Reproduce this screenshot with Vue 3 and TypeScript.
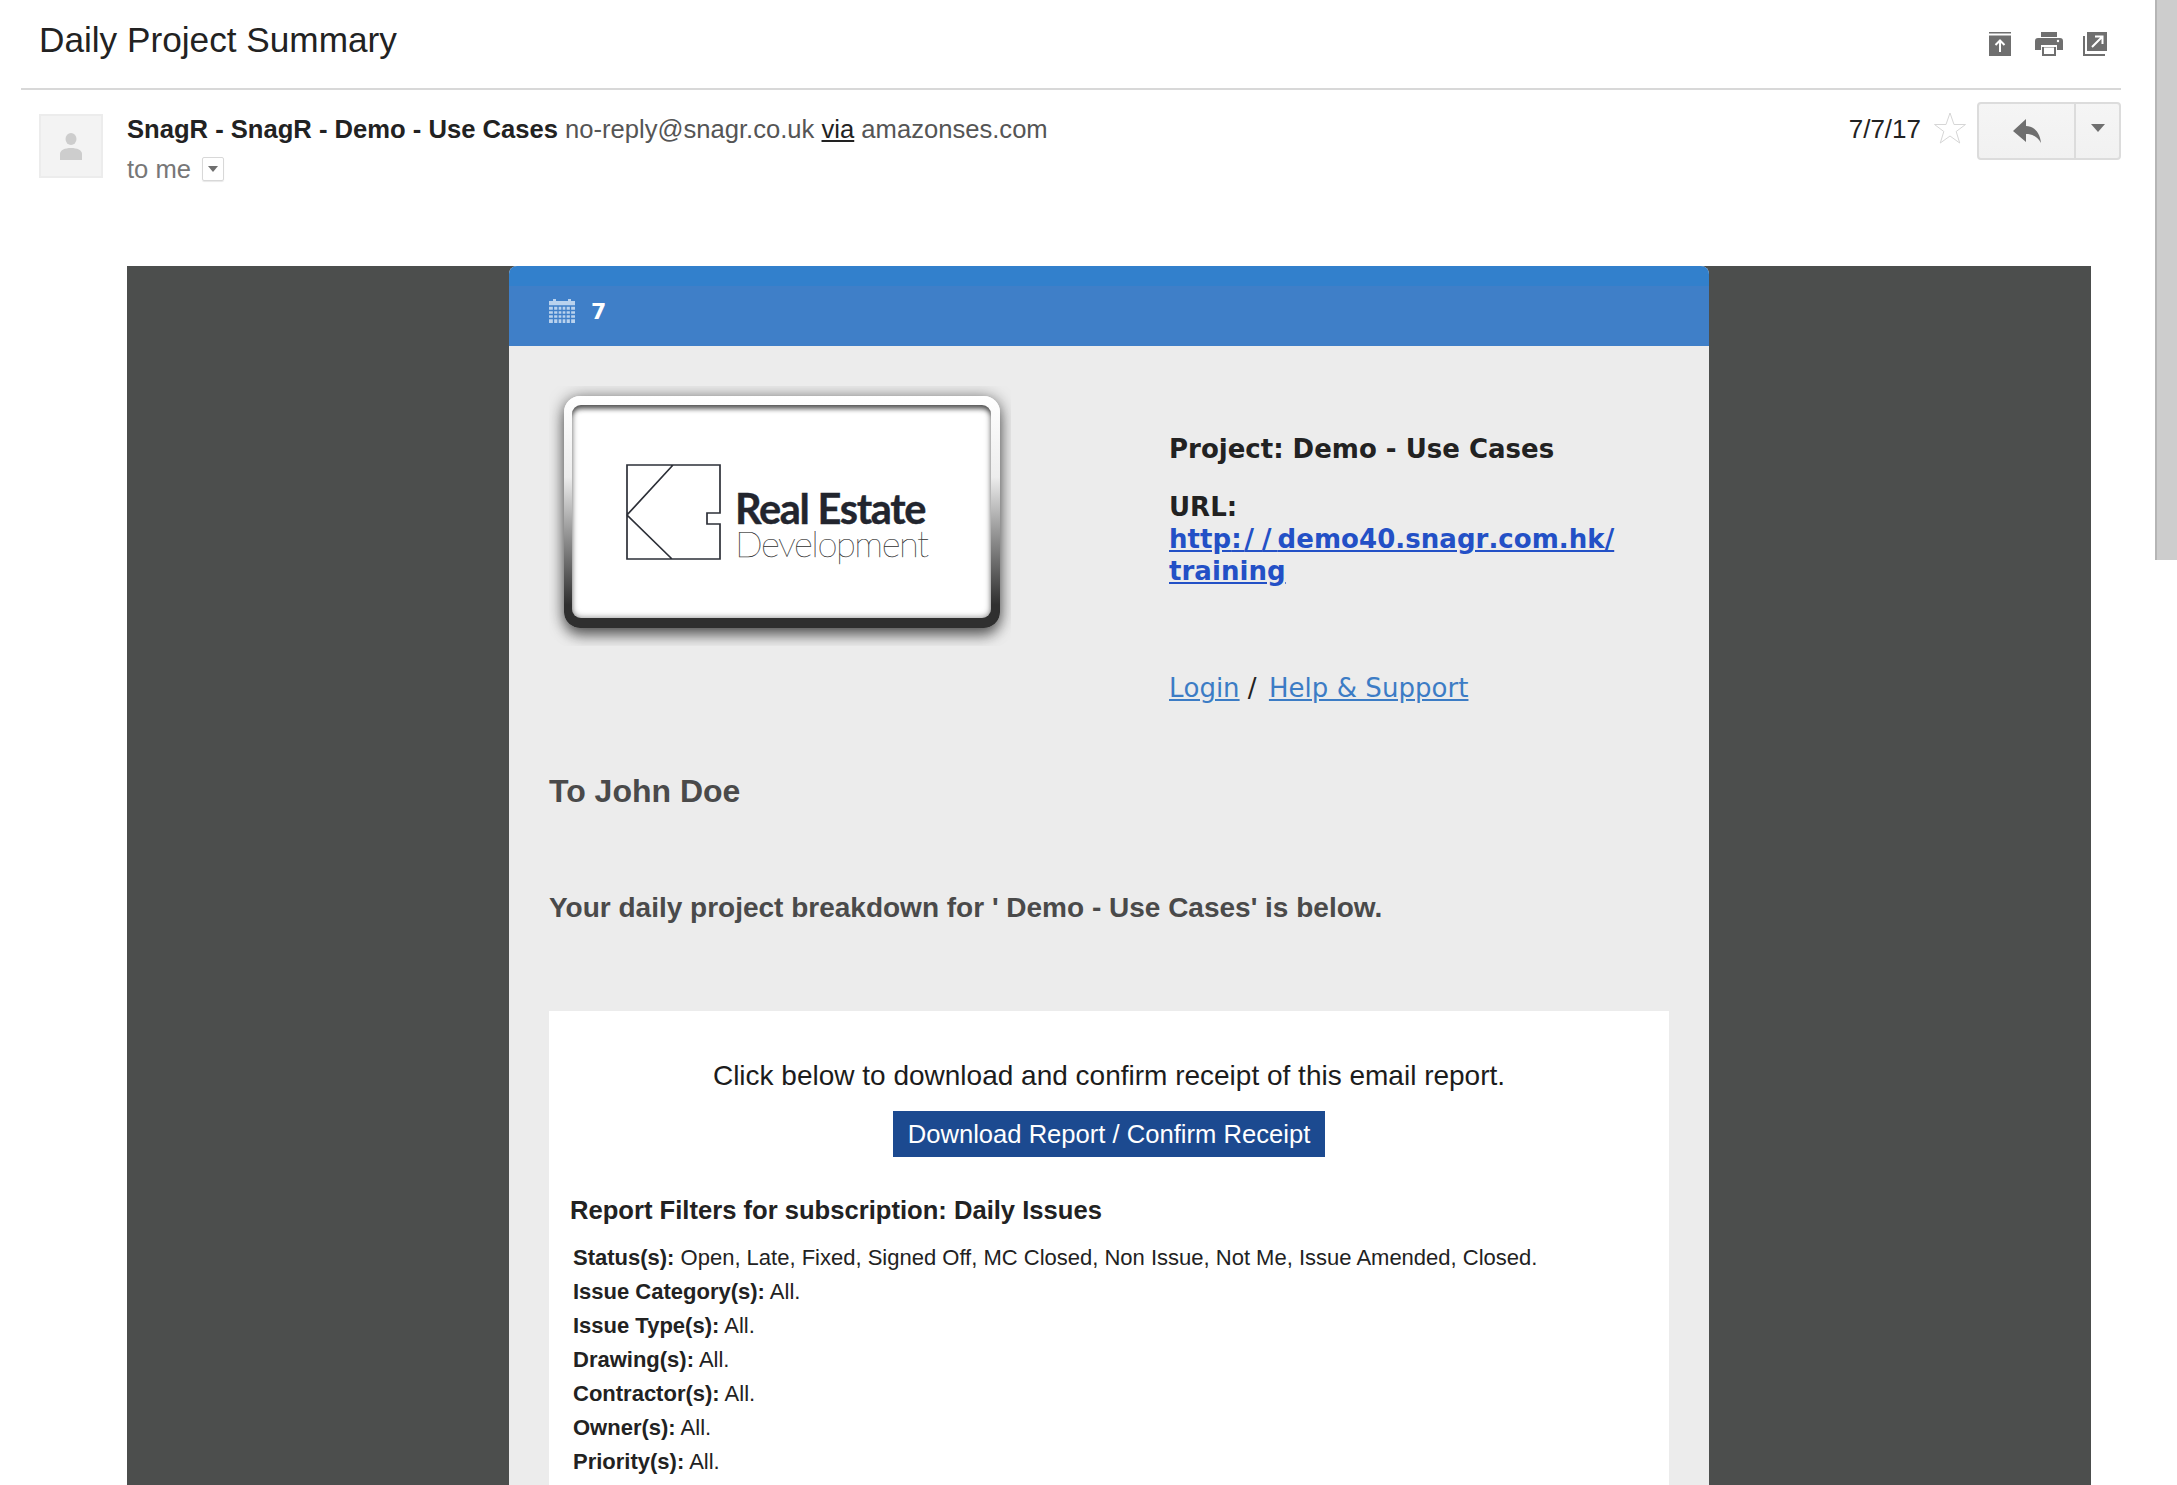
<script setup lang="ts">
const filters: { label: string; value: string }[] = [
  { label: 'Status(s):', value: 'Open, Late, Fixed, Signed Off, MC Closed, Non Issue, Not Me, Issue Amended, Closed.' },
  { label: 'Issue Category(s):', value: 'All.' },
  { label: 'Issue Type(s):', value: 'All.' },
  { label: 'Drawing(s):', value: 'All.' },
  { label: 'Contractor(s):', value: 'All.' },
  { label: 'Owner(s):', value: 'All.' },
  { label: 'Priority(s):', value: 'All.' },
]
</script>

<template>
  <div class="page">
    <div class="mail">
      <header class="subject">
        <h1>Daily Project Summary</h1>
        <div class="tools">
          <svg class="t-first" width="22" height="24" viewBox="0 0 22 24"><path fill="#6f6f6f" d="M0 0h22v1.500H0zM0 3.500h22V24H0z"/><path fill="none" stroke="#fff" stroke-width="2" d="M11 20V9M6.500 13 11 8.500l4.500 4.500"/></svg>
          <svg width="28" height="24" viewBox="0 0 28 24"><path fill="#6f6f6f" d="M6 0h16v5H6zM3 6h22a3 3 0 0 1 3 3v9h-6v-5H6v5H0V9a3 3 0 0 1 3-3zM7 15h14v9H7z"/><path fill="#fff" d="M9 15.500h10V22H9z"/><circle cx="23" cy="9" r="1.200" fill="#fff"/></svg>
          <svg width="24" height="24" viewBox="0 0 24 24"><path fill="#6f6f6f" d="M4 0h20v19H4z"/><path fill="#6f6f6f" d="M0 4h2v18h20v2H0z"/><path fill="none" stroke="#fff" stroke-width="2" d="M9 15 19 5M12 4.500h7.500V12"/></svg>
        </div>
      </header>
      <section class="sender">
        <div class="avatar">
          <svg width="22" height="27" viewBox="0 0 22 27"><ellipse cx="11" cy="6" rx="5.500" ry="6" fill="#cdcdcd"/><path fill="#cdcdcd" d="M0 27v-6c0-4 5-6 11-6s11 2 11 6v6z"/></svg>
        </div>
        <div class="who">
          <div class="from"><b>SnagR - SnagR - Demo - Use Cases</b> <span>no-reply@snagr.co.uk <u>via</u> amazonses.com</span></div>
          <div class="to">to me <i class="mini"><em></em></i></div>
        </div>
        <div class="date">7/7/17</div>
        <svg class="star" width="32" height="32" viewBox="0 0 32 32"><path fill="#fff" stroke="#d6d6d6" stroke-width="1" d="M16 1l4 11.500h11.500l-9.300 7 3.500 11.500-9.700-7-9.700 7 3.500-11.500-9.300-7H12z"/></svg>
        <div class="reply">
          <div class="r-main"><svg width="28" height="24" viewBox="0 0 28 24"><path fill="#6f6f6f" d="M0 12 13 0v7c9 .5 14 7 15 17-3-6-8-9-15-9v8z"/></svg></div>
          <div class="r-more"><em></em></div>
        </div>
      </section>

      <main class="stage">
        <div class="panel">
          <div class="bar">
            <svg width="26" height="25" viewBox="0 0 26 25">
              <path fill="#b9d2ee" d="M0 3h4V1h3v2h12V1h3v2h4v22H0z"/>
              <path fill="none" stroke="#3f7fc8" stroke-width="1.300" d="M0 8h26M0 12.500h26M0 16.500h26M0 20.500h26M4.500 8v17M9 8v17M13 8v17M17 8v17M21.500 8v17"/>
            </svg>
            <span>7</span>
          </div>
          <div class="content">
            <div class="intro">
              <div class="logo">
                <div class="frame">
                  <div class="card">
                    <svg class="mark" width="96" height="96" viewBox="0 0 96 96">
                      <path fill="none" stroke="#2d3038" stroke-width="1.700" d="M1 1h93v48H81v11h13v35H1zM47 1 1 51l45 44"/>
                    </svg>
                    <div class="brand">
                      <div class="b1">Real Estate</div>
                      <div class="b2">Development</div>
                    </div>
                  </div>
                </div>
              </div>
              <div class="meta">
                <div class="m-project">Project: Demo - Use Cases</div>
                <div class="m-url">URL:<br><a href="#" class="strong">http<span class="g1">:</span><span class="g2">/</span><span class="g3">/</span>demo40.snagr.com.hk/<br>training</a></div>
                <div class="m-links"><a href="#">Login</a> / <a href="#" class="help">Help &amp; Support</a></div>
              </div>
            </div>
            <h2>To John Doe</h2>
            <h3>Your daily project breakdown for ' Demo - Use Cases' is below.</h3>
            <div class="report">
              <p class="lead">Click below to download and confirm receipt of this email report.</p>
              <div class="cta"><a href="#">Download Report / Confirm Receipt</a></div>
              <h4>Report Filters for subscription: Daily Issues</h4>
              <ul>
                <li v-for="f in filters" :key="f.label"><b>{{ f.label }}</b> {{ f.value }}</li>
              </ul>
            </div>
          </div>
        </div>
      </main>
    </div>
    <div class="scroll"></div>
  </div>
</template>

<style>
html, body { margin: 0; background: #fff; overflow: hidden; }
</style>

<style scoped>
.page { position: relative; width: 2177px; height: 1485px; overflow: hidden; background: #fff; font-family: "Liberation Sans", Arial, sans-serif; }
.mail { width: 2155px; }
.subject { margin: 0 34px 0 21px; height: 88px; border-bottom: 2px solid #d8d8d8; padding: 0 14px 0 18px; box-sizing: content-box; display: flex; justify-content: space-between; }
h1 { margin: 20px 0 0; font-size: 35.200px; line-height: 40px; font-weight: 400; color: #222; }
.tools { display: flex; gap: 20px; margin-top: 32px; align-items: flex-start; }
.t-first { margin-right: 4px; }
.sender { display: flex; align-items: flex-start; padding: 24px 34px 0 39px; height: 152px; box-sizing: content-box; }
.avatar { width: 60px; height: 60px; border: 2px solid #ececec; background: #f3f3f3; display: flex; align-items: center; justify-content: center; }
.who { margin-left: 24px; flex: 1; margin-top: 2px; }
.from { font-size: 25.600px; line-height: 26px; color: #555; white-space: nowrap; }
.from b { color: #222; }
.from u { color: #222; }
.to { margin-top: 14px; font-size: 25.600px; line-height: 26px; color: #777; display: flex; align-items: center; gap: 11px; }
.mini { width: 22px; height: 24px; box-sizing: border-box; border: 1px solid #d8d8d8; border-radius: 2px; display: flex; align-items: center; justify-content: center; box-shadow: 0 1px 1px #e8e8e8; }
.mini em, .r-more em { display: block; width: 0; height: 0; border-style: solid; border-color: #6f6f6f transparent transparent; }
.mini em { border-width: 6px 5px 0; }
.date { font-size: 26px; line-height: 30px; color: #222; margin: 0 13px 0 0; }
.star { margin: -2px 11px 0 0; }
.reply { width: 144px; height: 58px; box-sizing: border-box; border: 2px solid #dcdcdc; border-radius: 4px; background: linear-gradient(#f5f5f5, #f1f1f1); display: flex; margin-top: -12px; }
.r-main { width: 95px; border-right: 2px solid #dcdcdc; display: flex; align-items: center; justify-content: center; }
.r-more { flex: 1; display: flex; justify-content: center; padding-top: 20px; }
.r-more em { border-width: 8px 7px 0; }
.stage { margin-left: 127px; width: 1964px; height: 1300px; background: #4c4e4d; }
.panel { width: 1200px; height: 100%; margin: 0 auto; background: #ececec; border-radius: 8px 8px 0 0; overflow: hidden; }
.bar { height: 80px; background: linear-gradient(#3280cc 0 20px, #3f7fc8 20px); display: flex; align-items: center; padding: 8px 0 0 40px; box-sizing: border-box; gap: 16px; color: #fff; font: 700 22px/30px "DejaVu Sans", sans-serif; }
.bar span { position: relative; top: 2px; }
.content { padding: 40px 40px 0; }
.intro { display: flex; height: 260px; }
.logo { width: 462px; height: 260px; background: #ececec; padding: 10px 11px 18px 15px; box-sizing: border-box; overflow: hidden; }
.frame { height: 232px; border-radius: 16px; padding: 9px 9px 10px 8px; box-sizing: border-box; background: linear-gradient(#fff 0, #ededed 35%, #9a9a9a 58%, #2f2f2f 90%, #2f2f2f 100%); box-shadow: 0 2px 16px rgba(0,0,0,.6), 0 10px 14px -2px rgba(0,0,0,.35); }
.card { height: 100%; background: #fff; border-radius: 9px; box-shadow: inset 0 6px 5px -2px rgba(0,0,0,.55), inset 0 0 6px rgba(0,0,0,.5); display: flex; align-items: center; padding-left: 54px; box-sizing: border-box; }
.mark { flex: none; margin-top: 0; }
.brand { margin-left: 13px; margin-top: 24px; color: #22252e; }
.b1 { font: 700 41.500px/38px "Lato", sans-serif; letter-spacing: -1.300px; -webkit-text-stroke: .4px #22252e; }
.b2 { font: 100 36.500px/32px "Lato", sans-serif; letter-spacing: -1.500px; color: #222; -webkit-text-stroke: .25px #333; }
.meta { margin-left: 158px; font: 700 26px/32px "DejaVu Sans", sans-serif; color: #222; padding-top: 47px; width: 470px; font-kerning: none; }
.m-url { margin-top: 26px; }
.strong { color: #2350c6; letter-spacing: .05px; }
.g1 { letter-spacing: 3px; }
.g2 { letter-spacing: 8px; }
.g3 { letter-spacing: 6px; }
.m-links { margin-top: 85px; font-weight: 400; }
.m-links a { color: #3c7cc5; }
.m-links .help { margin-left: 4px; letter-spacing: .05px; }
h2 { margin: 0; padding-top: 127px; font-size: 32px; line-height: 36px; color: #4a4a4a; }
h3 { margin: 0; padding-top: 81px; font-size: 28px; line-height: 36px; color: #4a4a4a; }
.report { margin-top: 85px; background: #fff; height: 500px; padding-top: 46px; box-sizing: border-box; }
.lead { margin: 0; text-align: center; font-size: 28px; line-height: 38px; color: #1c1c1c; }
.cta { display: flex; justify-content: center; margin-top: 16px; }
.cta a { width: 432px; height: 46px; background: #1c4a90; color: #fff; text-decoration: none; font-size: 25.600px; line-height: 46px; text-align: center; }
h4 { margin: 36px 0 0 21px; font-size: 25.600px; line-height: 34px; color: #222; }
ul { list-style: none; margin: 14px 0 0 24px; padding: 0; font-size: 22px; line-height: 34px; color: #222; }
.scroll { position: absolute; right: 0; top: 0; width: 22px; height: 560px; box-sizing: border-box; background: #cdcdcd; border-left: 2px solid #b5b5b5; }
</style>
